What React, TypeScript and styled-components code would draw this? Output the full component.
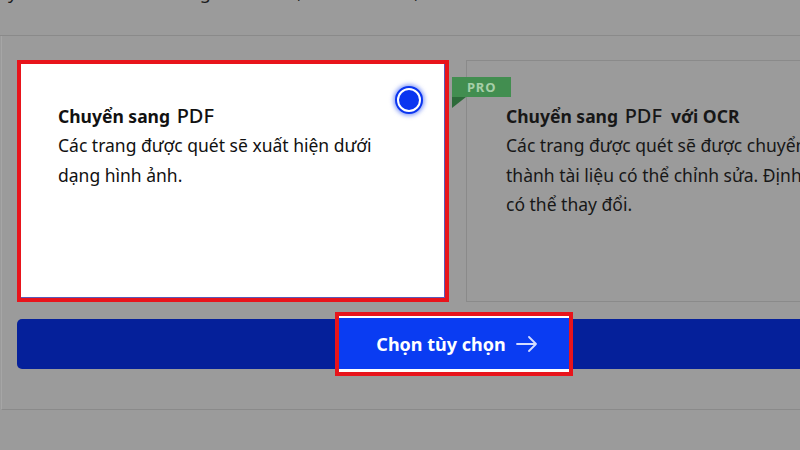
import React from "react";
import styled, { createGlobalStyle } from "styled-components";

const Global = createGlobalStyle`
  html, body { margin: 0; padding: 0; background: #9b9b9b; }
  body { font-family: "Noto Sans", "Open Sans", sans-serif; overflow: hidden; }
  * { box-sizing: border-box; }
`;

const Page = styled.div`
  width: 800px;
  height: 450px;
  overflow: hidden;
  background: #9b9b9b;
  display: flex;
  flex-direction: column;
`;

const Header = styled.div`
  height: 36px;
  flex: none;
  overflow: hidden;
  display: flex;
  align-items: flex-end;
  padding: 0 0 33px 8px;
  border-bottom: 1px solid #8a8a8a;
`;

const HeaderText = styled.div`
  font-size: 18px;
  line-height: 20px;
  color: #1a1a1a;
  white-space: nowrap;
`;

const Panel = styled.div`
  flex: none;
  margin-left: 1px;
  border-left: 1px solid #a6a6a6;
  border-bottom: 1px solid #8a8a8a;
  padding: 24px 0 40px 15px;
  width: 960px;
`;

const Cards = styled.div`
  display: grid;
  grid-template-columns: 432px 432px;
  gap: 17px;
  height: 242px;
`;

const OptionCard = styled.div<{ $selected?: boolean }>`
  position: relative;
  height: 242px;
  background: ${(p) => (p.$selected ? "#ffffff" : "#9b9b9b")};
  border: ${(p) => (p.$selected ? "4px solid #e8141b" : "1px solid #8a8a8a")};
  padding: ${(p) => (p.$selected ? "37px 0 0 37px" : "40px 0 0 39px")};
  box-shadow: ${(p) => (p.$selected ? "inset -1px -1px 0 #5a5ab8" : "none")};
  color: ${(p) => (p.$selected ? "#111111" : "#171717")};
`;

const Title = styled.div`
  font-size: 17.5px;
  line-height: 29px;
  white-space: nowrap;
`;

const Strong = styled.span`
  font-weight: 700;
`;

const Pdf = styled.span`
  font-weight: 500;
  font-size: 20px;
  margin-left: 2px;
`;

const Desc = styled.div`
  font-size: 17.5px;
  line-height: 29.5px;
  white-space: nowrap;
`;

const Radio = styled.div`
  position: absolute;
  top: 22px;
  right: 22px;
  width: 28px;
  height: 28px;
  border-radius: 50%;
  border: 2.5px solid #0a35f0;
  padding: 2px;
  background: #fff;
  box-shadow: 0 0 4px 1.5px rgba(10, 53, 240, 0.5);
`;

const RadioDot = styled.div`
  width: 100%;
  height: 100%;
  border-radius: 50%;
  background: #0a35f0;
`;

const ProBadge = styled.div`
  position: absolute;
  top: 16px;
  left: -15px;
  width: 59px;
  height: 20px;
  background: #428e50;
  color: #a6cfa8;
  font-size: 13px;
  font-weight: 700;
  line-height: 20px;
  padding-left: 15px;
  letter-spacing: 0.8px;
  &::after {
    content: "";
    position: absolute;
    left: 0;
    top: 20px;
    border-top: 11px solid #2d6b3a;
    border-left: 14px solid transparent;
    transform: scaleX(-1);
  }
`;

const ActionBar = styled.div`
  margin-top: 17px;
  width: 881px;
  height: 50px;
  border-radius: 5px;
  background: #05209a;
  display: flex;
  align-items: center;
  justify-content: center;
`;

const Highlight = styled.div`
  flex: none;
  width: 238px;
  height: 64px;
  border: 4px solid #e8141b;
  background: #0a3cf2;
  box-shadow: inset 0 2px 0 #ffffff, inset 0 -3px 0 #ffffff;
  display: flex;
  align-items: center;
  justify-content: center;
  gap: 10px;
  padding-left: 6px;
  margin-left: -7px;
  color: #ffffff;
  font-size: 18px;
  font-weight: 700;
  white-space: nowrap;
`;

const Arrow = () => (
  <svg width="22" height="16" viewBox="0 0 22 16" fill="none">
    <path
      d="M1 8H20M13 1L20 8L13 15"
      stroke="#d4dcff"
      strokeWidth="1.8"
      strokeLinecap="round"
      strokeLinejoin="round"
    />
  </svg>
);

export default function App() {
  return (
    <>
      <Global />
      <Page>
        <Header>
          <HeaderText>yêu cầu của khách hàng trên tờ kê, tin nhắn đến, xem tiến trình mới nhất</HeaderText>
        </Header>
        <Panel>
          <Cards>
            <OptionCard $selected>
              <Radio>
                <RadioDot />
              </Radio>
              <Title>
                <Strong>Chuyển sang</Strong> <Pdf>PDF</Pdf>
              </Title>
              <Desc>
                Các trang được quét sẽ xuất hiện dưới
                <br />
                dạng hình ảnh.
              </Desc>
            </OptionCard>
            <OptionCard>
              <ProBadge>PRO</ProBadge>
              <Title>
                <Strong>Chuyển sang</Strong> <Pdf>PDF</Pdf>
                <Strong>&nbsp; với OCR</Strong>
              </Title>
              <Desc>
                Các trang được quét sẽ được chuyển đổi
                <br />
                thành tài liệu có thể chỉnh sửa. Định dạng
                <br />
                có thể thay đổi.
              </Desc>
            </OptionCard>
          </Cards>
          <ActionBar>
            <Highlight>
              Chọn tùy chọn
              <Arrow />
            </Highlight>
          </ActionBar>
        </Panel>
      </Page>
    </>
  );
}
